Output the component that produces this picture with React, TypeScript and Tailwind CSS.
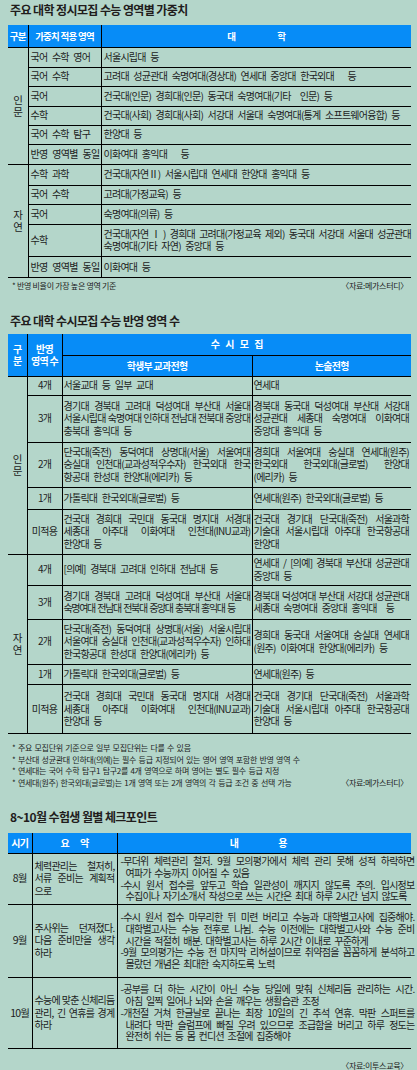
import React from "react";

const BLUE = "bg-[#078cf7]";

function Lines({ lines, justifyLast = false, tight = false }: { lines: string[]; justifyLast?: boolean; tight?: boolean }) {
  return (
    <div>
      {lines.map((l, i) => (
        <div
          key={i}
          className={
            i < lines.length - 1 || justifyLast
              ? "whitespace-nowrap [text-align-last:justify]"
              : tight
                ? "whitespace-nowrap tracking-[-1.35px] [word-spacing:1.5px]"
                : "whitespace-nowrap [word-spacing:3px]"
          }
        >
          {l}
        </div>
      ))}
    </div>
  );
}

function Vert({ a, b }: { a: string; b: string }) {
  return (
    <div className="flex flex-col items-center text-[10.5px] leading-[12px]">
      <span>{a}</span>
      <span>{b}</span>
    </div>
  );
}

const weights = {
  인문: [
    ["국어 수학 영어", "서울시립대 등"],
    ["국어 수학", "고려대 성균관대 숙명여대(경상대) 연세대 중앙대 한국외대\u00a0\u00a0\u00a0등"],
    ["국어", "건국대(인문) 경희대(인문) 동국대 숙명여대(기타\u00a0\u00a0인문) 등"],
    ["수학", "건국대(사회) 경희대(사회) 서강대 서울대 숙명여대(통계 소프트웨어융합) 등"],
    ["국어 수학 탐구", "한양대 등"],
    ["반영 영역별 동일", "이화여대 홍익대\u00a0\u00a0\u00a0등"],
  ],
  자연: [
    ["수학 과학", "건국대(자연Ⅱ) 서울시립대 연세대 한양대 홍익대 등"],
    ["국어 수학", "고려대(가정교육) 등"],
    ["국어", "숙명여대(의류) 등"],
    ["수학", "건국대(자연Ⅰ) 경희대 고려대(가정교육 제외) 동국대 서강대 서울대 성균관대\n숙명여대(기타 자연) 중앙대 등"],
    ["반영 영역별 동일", "이화여대 등"],
  ],
};

const rowH1 = {
  인문: ["h-[20px]", "h-[19px]", "h-[20px]", "h-[19px]", "h-[19px]", "h-[20px]"],
  자연: ["h-[21px]", "h-[19px]", "h-[20px]", "h-[32px]", "h-[21px]"],
};

type SusiRow = { n: string; a: string[]; b: string[]; h: string; tight?: boolean };

const susi: Record<string, SusiRow[]> = {
  인문: [
    { n: "4개", a: ["서울교대 등 일부 교대"], b: ["연세대"], h: "h-[19px]" },
    {
      n: "3개",
      a: ["경기대 경북대 고려대 덕성여대 부산대 서울대", "서울시립대 숙명여대 인하대 전남대 전북대 중앙대", "충북대 홍익대 등"],
      b: ["경북대 동국대 덕성여대 부산대 서강대", "성균관대   세종대   숙명여대   이화여대", "중앙대 홍익대 등"],
      h: "h-[47px]",
    },
    {
      n: "2개",
      a: ["단국대(죽전) 동덕여대 상명대(서울) 서울여대", "숭실대 인천대(교과성적우수자) 한국외대 한국", "항공대 한성대 한양대(에리카) 등"],
      b: ["경희대 서울여대 숭실대 연세대(원주)", "한국외대   한국외대(글로벌)   한양대", "(에리카) 등"],
      h: "h-[45px]",
    },
    { n: "1개", a: ["가톨릭대 한국외대(글로벌) 등"], b: ["연세대(원주) 한국외대(글로벌) 등"], h: "h-[22px]" },
    {
      n: "미적용",
      a: ["건국대 경희대 국민대 동국대 명지대 서경대", "세종대 아주대 이화여대 인천대(INU교과)", "한양대 등"],
      b: ["건국대 경기대 단국대(죽전) 서울과학", "기술대 서울시립대 아주대 한국항공대", "한양대"],
      h: "h-[45px]",
    },
  ],
  자연: [
    { n: "4개", a: ["[의예] 경북대 고려대 인하대 전남대 등"], b: ["연세대 / [의예] 경북대 부산대 성균관대", "중앙대 등"], h: "h-[31px]" },
    {
      n: "3개",
      a: ["경기대 경북대 고려대 덕성여대 부산대 서울대", "숙명여대 전남대 전북대 중앙대 충북대 홍익대 등"],
      b: ["경북대 덕성여대 부산대 서강대 성균관대", "세종대 숙명여대 중앙대 홍익대\u00a0\u00a0등"],
      h: "h-[34px]",
      tight: true,
    },
    {
      n: "2개",
      a: ["단국대(죽전) 동덕여대 상명대(서울) 서울시립대", "서울여대 숭실대 인천대(교과성적우수자) 인하대", "한국항공대 한성대 한양대(에리카) 등"],
      b: ["경희대 동국대 서울여대 숭실대 연세대", "(원주) 이화여대 한양대(에리카) 등"],
      h: "h-[45px]",
    },
    { n: "1개", a: ["가톨릭대 한국외대(글로벌) 등"], b: ["연세대(원주) 등"], h: "h-[20px]" },
    {
      n: "미적용",
      a: ["건국대 경희대 국민대 동국대 명지대 서경대", "세종대 아주대 이화여대 인천대(INU교과)", "한양대 등"],
      b: ["건국대 경기대 단국대(죽전) 서울과학", "기술대 서울시립대 아주대 한국항공대", "한양대 등"],
      h: "h-[49px]",
    },
  ],
};

const months = [
  {
    m: "8월",
    s: ["체력관리는 철저히,", "서류 준비는 계획적", "으로"],
    c: [
      "-무더위 체력관리 철저. 9월 모의평가에서 체력 관리 못해 성적 하락하면",
      "여파가 수능까지 이어질 수 있음",
      "-수시 원서 접수를 앞두고 학습 일관성이 깨지지 않도록 주의. 입시정보",
      "수집이나 자기소개서 작성으로 쓰는 시간은 최대 하루 2시간 넘지 않도록",
    ],
    h: "h-[51px]",
  },
  {
    m: "9월",
    s: ["주사위는 던져졌다.", "다음 준비만을 생각", "하라"],
    c: [
      "-수시 원서 접수 마무리한 뒤 미련 버리고 수능과 대학별고사에 집중해야.",
      "대학별고사는 수능 전후로 나뉨. 수능 이전에는 대학별고사와 수능 준비",
      "시간을 적절히 배분. 대학별고사는 하루 2시간 이내로 꾸준하게",
      "-9월 모의평가는 수능 전 마지막 리허설이므로 취약점을 꼼꼼하게 분석하고",
      "몰랐던 개념은 최대한 숙지하도록 노력",
    ],
    h: "h-[73px]",
  },
  {
    m: "10월",
    s: ["수능에 맞춘 신체리듬", "관리, 긴 연휴를 경계", "하라"],
    c: [
      "-공부를 더 하는 시간이 아닌 수능 당일에 맞춰 신체리듬 관리하는 시간.",
      "아침 일찍 일어나 뇌와 손을 깨우는 생활습관 조정",
      "-개천절 거쳐 한글날로 끝나는 최장 10일의 긴 추석 연휴. 막판 스퍼트를",
      "내려다 막판 슬럼프에 빠질 우려 있으므로 조급함을 버리고 하루 정도는",
      "완전히 쉬는 등 몸 컨디션 조절에 집중해야",
    ],
    h: "h-[71px]",
  },
];

export default function App() {
  return (
    <div className="w-[417px] h-[1070px] overflow-hidden bg-[#b4d6ca] text-[#211c1c] font-['Noto_Sans_CJK_KR',sans-serif] text-[10px] leading-[12.5px] tracking-[-0.75px]">
      {/* 정시 가중치 */}
      <div className="h-[25px] pt-[2px] pl-[10px] text-[12px] leading-[15px] font-bold tracking-[-0.6px]">
        주요 대학 정시모집 수능 영역별 가중치
      </div>
      <div className="ml-[8px] w-[403px] border-b border-black">
        <table className="w-[403px] table-fixed border-collapse border-hidden">
          <colgroup>
            <col className="w-[20px]" />
            <col className="w-[73px]" />
            <col />
          </colgroup>
          <thead>
            <tr className={`h-[22px] ${BLUE} text-white font-bold text-[9.5px]`}>
              <th className="border border-black font-bold">구분</th>
              <th className="border border-black font-bold">가중치 적용 영역</th>
              <th className="border border-black font-bold">
                <div className="flex justify-center gap-[42px]">
                  <span>대</span>
                  <span>학</span>
                </div>
              </th>
            </tr>
          </thead>
          <tbody>
            {(["인문", "자연"] as const).map((g) =>
              weights[g].map(([area, uni], i) => (
                <tr key={g + i} className={rowH1[g][i]}>
                  {i === 0 && (
                    <td rowSpan={weights[g].length} className="border border-black align-middle">
                      <Vert a={g[0]} b={g[1]} />
                    </td>
                  )}
                  <td className="border border-black pl-[2px] pr-[1px] align-middle">
                    <Lines lines={[area]} justifyLast={area === "반영 영역별 동일"} />
                  </td>
                  <td className="border border-black pl-[2px] align-middle">
                    <Lines lines={uni.split("\n")} />
                  </td>
                </tr>
              ))
            )}
          </tbody>
        </table>
      </div>
      <div className="h-[17px] flex items-center justify-between pl-[12px] pr-[9px] text-[8px] tracking-[-0.3px]">
        <span>* 반영 비율이 가장 높은 영역 기준</span>
        <span>〈자료:메가스터디〉</span>
      </div>

      {/* 수시 반영 영역 수 */}
      <div className="h-[39px] pt-[18px] pl-[10px] text-[12px] leading-[15px] font-bold tracking-[-0.6px]">
        주요 대학 수시모집 수능 반영 영역 수
      </div>
      <div className="ml-[8px] w-[403px] border-b border-black">
        <table className="w-[403px] table-fixed border-collapse border-hidden">
          <colgroup>
            <col className="w-[19px]" />
            <col className="w-[35px]" />
            <col className="w-[190px]" />
            <col />
          </colgroup>
          <thead className={`${BLUE} text-white text-[10px] leading-[12px]`}>
            <tr className="h-[21px]">
              <th rowSpan={2} className="border border-black font-bold">
                <div className="flex flex-col items-center">
                  <span>구</span>
                  <span>분</span>
                </div>
              </th>
              <th rowSpan={2} className="border border-black font-bold">
                <div className="flex flex-col items-center">
                  <span>반영</span>
                  <span>영역 수</span>
                </div>
              </th>
              <th colSpan={2} className="border border-black font-bold">
                <div className="flex justify-center gap-[6px]">
                  <span>수</span>
                  <span>시</span>
                  <span>모</span>
                  <span>집</span>
                </div>
              </th>
            </tr>
            <tr className="h-[21px]">
              <th className="border border-black font-bold">학생부 교과전형</th>
              <th className="border border-black font-bold">논술전형</th>
            </tr>
          </thead>
          <tbody>
            {(["인문", "자연"] as const).map((g) =>
              susi[g].map((r, i) => (
                <tr key={g + i} className={r.h}>
                  {i === 0 && (
                    <td rowSpan={susi[g].length} className="border border-black align-middle">
                      <Vert a={g[0]} b={g[1]} />
                    </td>
                  )}
                  <td className="border border-black text-center align-middle">{r.n}</td>
                  <td className="border border-black pl-[1px] pr-[1px] align-middle">
                    <Lines lines={r.a} tight={r.tight} />
                  </td>
                  <td className="border border-black pl-[1px] pr-[2px] align-middle">
                    <Lines lines={r.b} />
                  </td>
                </tr>
              ))
            )}
          </tbody>
        </table>
      </div>
      <div className="h-[55px] pt-[8px] pl-[12px] pr-[9px] text-[8px] leading-[11.7px] tracking-[-0.3px] [word-spacing:1px]">
        <div>* 주요 모집단위 기준으로 일부 모집단위는 다를 수 있음</div>
        <div>* 부산대 성균관대 인하대(의예)는 필수 등급 지정되어 있는 영어 영역 포함한 반영 영역 수</div>
        <div>* 연세대는 국어 수학 탐구1 탐구2를 4개 영역으로 하며 영어는 별도 필수 등급 지정</div>
        <div className="flex justify-between">
          <span>* 연세대(원주) 한국외대(글로벌)는 1개 영역 또는 2개 영역의 각 등급 조건 중 선택 가능</span>
          <span>〈자료:메가스터디〉</span>
        </div>
      </div>

      {/* 월별 체크포인트 */}
      <div className="h-[44px] pt-[20px] pl-[10px] text-[12px] leading-[15px] font-bold tracking-[-0.6px]">
        8~10월 수험생 월별 체크포인트
      </div>
      <div className="ml-[8px] w-[403px] border-b border-black">
        <table className="w-[403px] table-fixed border-collapse border-hidden">
          <colgroup>
            <col className="w-[24px]" />
            <col className="w-[85px]" />
            <col />
          </colgroup>
          <thead>
            <tr className={`h-[20px] ${BLUE} text-white text-[10px]`}>
              <th className="border border-black font-bold">시기</th>
              <th className="border border-black font-bold">
                <div className="flex justify-center gap-[11px]">
                  <span>요</span>
                  <span>약</span>
                </div>
              </th>
              <th className="border border-black font-bold">
                <div className="flex justify-center gap-[40px] pr-[12px]">
                  <span>내</span>
                  <span>용</span>
                </div>
              </th>
            </tr>
          </thead>
          <tbody>
            {months.map((r) => (
              <tr key={r.m} className={r.h}>
                <td className="border border-black text-center align-middle text-[10.5px]">{r.m}</td>
                <td className="border border-black pl-[2px] pr-[2px] align-middle">
                  <Lines lines={r.s} />
                </td>
                <td className="border border-black align-middle leading-[11.8px]">
                  <div className="w-[297px] pl-[3px]">
                    {r.c.map((l, i) => {
                      const next = r.c[i + 1];
                      const just = next !== undefined && !next.startsWith("-");
                      const cont = !l.startsWith("-");
                      return (
                        <div
                          key={i}
                          className={
                            (cont ? "pl-[5px] " : "") +
                            (just ? "whitespace-nowrap [text-align-last:justify]" : "whitespace-nowrap [word-spacing:2px]")
                          }
                        >
                          {l}
                        </div>
                      );
                    })}
                  </div>
                </td>
              </tr>
            ))}
          </tbody>
        </table>
      </div>
      <div className="pt-[12px] pr-[9px] text-right text-[8px] leading-[10px] tracking-[-0.3px]">
        〈자료:이투스교육〉
      </div>
    </div>
  );
}
